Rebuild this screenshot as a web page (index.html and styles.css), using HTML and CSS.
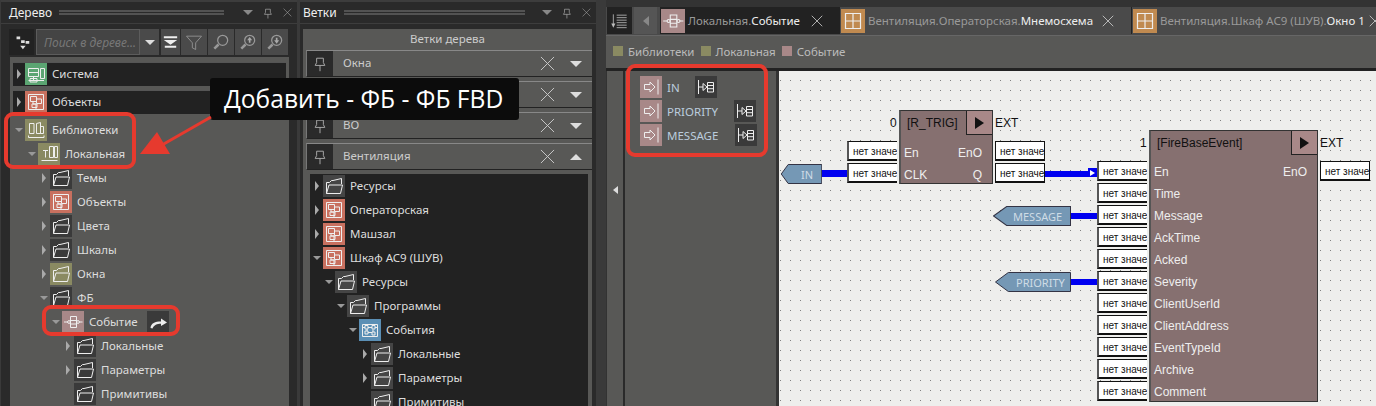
FILE: index.html
```html
<!DOCTYPE html>
<html lang="ru">
<head>
<meta charset="utf-8">
<title>Событие</title>
<link rel="stylesheet" href="styles.css">
</head>
<body>
<svg class="defs" width="0" height="0">
  <symbol id="folder" viewBox="0 0 22 22"><path d="M3.500 18.500V7.500H6.500L8.500 5.500H10L18.500 3.500V9M3.500 18.500L6 10H19.500L17.500 18.500Z" fill="none" stroke="currentColor" stroke-width="1"/></symbol>
  <symbol id="objects" viewBox="0 0 22 22"><path d="M3.500 3.500H18.500V18.500H3.500ZM5.500 5.500H11.500V10.500H5.500ZM11.500 8H16.500V12.500H11.500ZM8 10.500V13H11V18M7 13H12V16.500H7Z" fill="none" stroke="currentColor" stroke-width="1"/></symbol>
  <symbol id="system" viewBox="0 0 22 22"><path d="M3.500 5.500H13.500V13.500H3.500ZM3.500 9.500H13.500M8.500 13.500V17.500M3.500 17.500H19M15.500 5.500H19.500V15.500H15.500ZM5 15.500H12V19H5Z" fill="none" stroke="currentColor" stroke-width="1"/></symbol>
  <symbol id="library" viewBox="0 0 22 22"><path d="M4.500 4.500H9V14.500H4.500ZM11.500 4.500L15.500 3.500V14.500H11.500ZM15.500 7.500H18.500V14.500H15.500ZM3.500 16.500V18.500H19V16.500" fill="none" stroke="currentColor" stroke-width="1"/></symbol>
  <symbol id="local" viewBox="0 0 22 22"><path d="M11.500 3.500H15.500V14.500H11.500ZM16.500 3.500H19.500V14.500H16.500ZM7.500 7V14.500M5 7.500H10M3.500 17.500H19.500" fill="none" stroke="currentColor" stroke-width="1"/></symbol>
  <symbol id="fb" viewBox="0 0 22 22"><path d="M8.500 5.500H14.500V16.500H8.500ZM8.500 9.500H14.500M8.500 13H14.500M2 11H6M17 11H20.500" fill="none" stroke="currentColor" stroke-width="1"/><circle cx="7" cy="11" r="1.400" fill="none" stroke="currentColor"/><circle cx="16" cy="11" r="1.400" fill="none" stroke="currentColor"/></symbol>
  <symbol id="program" viewBox="0 0 22 22"><path d="M3.500 5.500H18.500V17.500H3.500ZM3.500 8.500H18.500M8 8.500V13.500M8 13.500H14M14 10.500V15.500" fill="none" stroke="currentColor" stroke-width="1"/><path d="M6 6.500H9V10H6ZM13 6.500H16V10H13ZM6 12H9V15H6ZM13 13H16V16H13Z" fill="#5b8fb5" stroke="currentColor"/></symbol>
  <symbol id="window" viewBox="0 0 24 24"><path d="M4.500 4.500H19.500V19.500H4.500ZM4.500 12H19.500M12 4.500V19.500" fill="none" stroke="currentColor" stroke-width="1.200"/></symbol>
  <symbol id="pin" viewBox="0 0 26 26"><path d="M9.500 7.500H16.500V12L18 15H8L9.500 12ZM13 15V21" fill="none" stroke="#aaa" stroke-width="1"/></symbol>
  <symbol id="close" viewBox="0 0 16 16"><path d="M1 1L15 15M15 1L1 15" stroke="currentColor" stroke-width="1"/></symbol>
  <symbol id="input" viewBox="0 0 22 22"><path d="M4.500 8.500H10V6L15 11L10 16V13.500H4.500Z M18 3.500V18.500" fill="none" stroke="currentColor" stroke-width="1"/></symbol>
  <symbol id="link" viewBox="0 0 22 22"><path d="M3.500 4V18M3.500 11H8M8 7.500L12 11L8 14.500ZM12.500 6.500H18.500V16H12.500ZM12.500 9.500H18.500M12.500 12.700H18.500" fill="none" stroke="currentColor" stroke-width="1"/></symbol>
  <symbol id="tag-shape" viewBox="0 0 80 20" preserveAspectRatio="none"><polygon points="0.500,10 14,0.500 79.500,0.500 79.500,19.500 14,19.500" fill="#7598b5" stroke="#334" stroke-width="1" vector-effect="non-scaling-stroke"/></symbol>
</svg>

<main class="app">
  <section class="panel tree-panel">
    <header class="panel-head">
      <span class="panel-title">Дерево</span><span class="grip"></span>
      <span class="tri-down small"></span>
      <svg class="head-pin"><use href="#pin"/></svg>
      <svg class="head-close"><use href="#close"/></svg>
    </header>
    <div class="toolbar">
      <button class="tool tool-first"><svg viewBox="0 0 22 22"><path d="M5 5H9V8H5ZM10 9H14V12H10ZM15 10H19V13H15ZM7 8L12 10M12 12V15M9 15H15L12 19Z" fill="#ddd"/></svg></button>
      <div class="search"><span>Поиск в дереве...</span></div>
      <button class="tool tool-drop"><span class="tri-down"></span></button>
      <button class="tool t1"><svg viewBox="0 0 20 20"><path d="M3 4H17V6H3ZM3 8H17L10 13L3 8ZM4 14H16V16H4Z" fill="#eee"/></svg></button>
      <button class="tool t2"><svg viewBox="0 0 24 24"><path d="M3 5H21L14 13V21L10 19V13Z" fill="none" stroke="#999"/></svg></button>
      <button class="tool t2"><svg viewBox="0 0 24 24"><circle cx="14" cy="10" r="6" fill="none" stroke="#999" stroke-width="1.500"/><path d="M9 15L4 20" stroke="#999" stroke-width="3"/></svg></button>
      <button class="tool t2"><svg viewBox="0 0 24 24"><circle cx="14" cy="10" r="6" fill="none" stroke="#999" stroke-width="1.500"/><path d="M9 15L4 20" stroke="#999" stroke-width="3"/><path d="M14 6L11 10H17ZM13 10H15V13H13Z" fill="#aaa"/></svg></button>
      <button class="tool t2"><svg viewBox="0 0 24 24"><circle cx="14" cy="10" r="6" fill="none" stroke="#999" stroke-width="1.500"/><path d="M9 15L4 20" stroke="#999" stroke-width="3"/><path d="M14 14L11 10H17ZM13 7H15V10H13Z" fill="#aaa"/></svg></button>
    </div>
    <div class="tree grey-tree">
      <div class="section first"><i class="arr r"></i><span class="ico green"><svg><use href="#system"/></svg></span><span class="lbl">Система</span></div>
      <div class="section"><i class="arr r"></i><span class="ico red"><svg><use href="#objects"/></svg></span><span class="lbl">Объекты</span></div>
      <div class="rows">
        <div class="row l0"><i class="arr d"></i><span class="ico olive"><svg><use href="#library"/></svg></span><span class="lbl">Библиотеки</span></div>
        <div class="row l1"><i class="arr d"></i><span class="ico olive"><svg><use href="#local"/></svg></span><span class="lbl">Локальная</span></div>
        <div class="row l2"><i class="arr r"></i><span class="ico dark"><svg><use href="#folder"/></svg></span><span class="lbl">Темы</span></div>
        <div class="row l2"><i class="arr r"></i><span class="ico red"><svg><use href="#objects"/></svg></span><span class="lbl">Объекты</span></div>
        <div class="row l2"><i class="arr r"></i><span class="ico dark"><svg><use href="#folder"/></svg></span><span class="lbl">Цвета</span></div>
        <div class="row l2"><i class="arr r"></i><span class="ico dark"><svg><use href="#folder"/></svg></span><span class="lbl">Шкалы</span></div>
        <div class="row l2"><i class="arr r"></i><span class="ico olive"><svg><use href="#folder"/></svg></span><span class="lbl">Окна</span></div>
        <div class="row l2"><i class="arr d"></i><span class="ico dark"><svg><use href="#folder"/></svg></span><span class="lbl">ФБ</span></div>
        <div class="row l3"><i class="arr d"></i><span class="ico rose"><svg><use href="#fb"/></svg></span><span class="lbl name-event">Событие</span>
          <span class="ico dark jump"><svg viewBox="0 0 22 22"><path d="M3.500 17C4 12 8 10.500 14 10.500V7.500L20 11.500L14 15V12.800C10 12.800 7 14 5.500 17.500Z" fill="#eee"/></svg></span></div>
        <div class="row l4"><i class="arr r"></i><span class="ico dark"><svg><use href="#folder"/></svg></span><span class="lbl">Локальные</span></div>
        <div class="row l4"><i class="arr r"></i><span class="ico dark"><svg><use href="#folder"/></svg></span><span class="lbl">Параметры</span></div>
        <div class="row l4"><i class="arr none"></i><span class="ico dark"><svg><use href="#folder"/></svg></span><span class="lbl">Примитивы</span></div>
      </div>
    </div>
  </section>

  <section class="panel branch-panel">
    <header class="panel-head">
      <span class="panel-title">Ветки</span><span class="grip"></span>
      <span class="tri-down small"></span>
      <svg class="head-pin"><use href="#pin"/></svg>
      <svg class="head-close"><use href="#close"/></svg>
    </header>
    <div class="branches">
      <div class="branches-title">Ветки дерева</div>
      <div class="branch"><span class="branch-pin"><svg><use href="#pin"/></svg></span><span class="lbl branch-name">Окна</span><svg class="branch-x"><use href="#close"/></svg><span class="tri-down big"></span></div>
      <div class="branch"><span class="branch-pin"><svg><use href="#pin"/></svg></span><span class="lbl branch-name">ТГА</span><svg class="branch-x"><use href="#close"/></svg><span class="tri-down big"></span></div>
      <div class="branch"><span class="branch-pin"><svg><use href="#pin"/></svg></span><span class="lbl branch-name">ВО</span><svg class="branch-x"><use href="#close"/></svg><span class="tri-down big"></span></div>
      <div class="branch"><span class="branch-pin"><svg><use href="#pin"/></svg></span><span class="lbl branch-name">Вентиляция</span><svg class="branch-x"><use href="#close"/></svg><span class="tri-up big"></span></div>
      <div class="tree dark-tree">
        <div class="row l0"><i class="arr r"></i><span class="ico grey"><svg><use href="#folder"/></svg></span><span class="lbl">Ресурсы</span></div>
        <div class="row l0"><i class="arr r"></i><span class="ico red"><svg><use href="#objects"/></svg></span><span class="lbl">Операторская</span></div>
        <div class="row l0"><i class="arr r"></i><span class="ico red"><svg><use href="#objects"/></svg></span><span class="lbl">Машзал</span></div>
        <div class="row l0"><i class="arr d"></i><span class="ico red"><svg><use href="#objects"/></svg></span><span class="lbl">Шкаф АС9 (ШУВ)</span></div>
        <div class="row l1"><i class="arr d"></i><span class="ico grey"><svg><use href="#folder"/></svg></span><span class="lbl">Ресурсы</span></div>
        <div class="row l2"><i class="arr d"></i><span class="ico grey"><svg><use href="#folder"/></svg></span><span class="lbl">Программы</span></div>
        <div class="row l3"><i class="arr d"></i><span class="ico blue"><svg><use href="#program"/></svg></span><span class="lbl">События</span></div>
        <div class="row l4"><i class="arr r"></i><span class="ico grey"><svg><use href="#folder"/></svg></span><span class="lbl">Локальные</span></div>
        <div class="row l4"><i class="arr r"></i><span class="ico grey"><svg><use href="#folder"/></svg></span><span class="lbl">Параметры</span></div>
        <div class="row l4"><i class="arr none"></i><span class="ico grey"><svg><use href="#folder"/></svg></span><span class="lbl">Примитивы</span></div>
      </div>
    </div>
  </section>

  <section class="editor">
    <nav class="tabs">
      <button class="tab-btn list"><svg viewBox="0 0 24 24"><path d="M8 5H20M8 8H20M8 11H20M8 14H20M8 17H20M8 20H20M4 4V17" stroke="#bbb" fill="none"/><path d="M1.500 15H6.500L4 20Z" fill="#bbb"/></svg></button>
      <button class="tab-btn back"><span class="tri-left"></span></button>
      <div class="tab active"><span class="tab-ico rose"><svg><use href="#fb"/></svg></span><span class="tab-text"><span class="muted">Локальная.</span>Событие</span><svg class="tab-x"><use href="#close"/></svg></div>
      <div class="tab t-vent"><span class="tab-ico orange"><svg><use href="#window"/></svg></span><span class="tab-text"><span class="muted">Вентиляция.Операторская.</span>Мнемосхема</span><svg class="tab-x"><use href="#close"/></svg></div>
      <div class="tab t-last"><span class="tab-ico orange"><svg><use href="#window"/></svg></span><span class="tab-text"><span class="muted">Вентиляция.Шкаф АС9 (ШУВ).</span>Окно 1</span><svg class="tab-x"><use href="#close"/></svg></div>
    </nav>
    <div class="crumbs">
      <span class="sq olive-sq"></span><span class="crumb">Библиотеки</span>
      <span class="sq olive-sq"></span><span class="crumb">Локальная</span>
      <span class="sq rose-sq"></span><span class="crumb">Событие</span>
    </div>
    <div class="work">
      <div class="strip"><span class="tri-left white"></span></div>
      <aside class="fn-vars">
        <div class="var"><span class="ico rose"><svg><use href="#input"/></svg></span><span class="var-name w-in">IN</span><span class="ico dark"><svg><use href="#link"/></svg></span></div>
        <div class="var"><span class="ico rose"><svg><use href="#input"/></svg></span><span class="var-name w-pr">PRIORITY</span><span class="ico dark"><svg><use href="#link"/></svg></span></div>
        <div class="var"><span class="ico rose"><svg><use href="#input"/></svg></span><span class="var-name w-ms">MESSAGE</span><span class="ico dark"><svg><use href="#link"/></svg></span></div>
      </aside>
      <div class="canvas">
        <div class="wire w1"></div>
        <div class="wire w2"></div>
        <div class="wire w3"></div>
        <div class="wire w4"></div>
        <span class="wire-tip"><i></i></span>
        <div class="tag tag-in"><svg><use href="#tag-shape"/></svg><span>IN</span></div>
        <div class="tag tag-msg"><svg><use href="#tag-shape"/></svg><span>MESSAGE</span></div>
        <div class="tag tag-pri"><svg><use href="#tag-shape"/></svg><span>PRIORITY</span></div>

        <div class="fb fb-trig">
          <div class="pins in">
            <span class="pin-box">нет значения</span>
            <span class="pin-box">нет значения</span>
          </div>
          <div class="fb-body">
            <span class="fb-num">0</span>
            <div class="fb-head"><span class="fb-title">[R_TRIG]</span><span class="fb-run"><i></i></span></div>
            <span class="fb-ext">EXT</span>
            <div class="fb-row"><span>En</span><span>EnO</span></div>
            <div class="fb-row"><span>CLK</span><span>Q</span></div>
          </div>
          <div class="pins out">
            <span class="pin-box">нет значения</span>
            <span class="pin-box">нет значения</span>
          </div>
        </div>

        <div class="fb fb-event">
          <div class="pins in">
            <span class="pin-box">нет значения</span><span class="pin-box">нет значения</span><span class="pin-box">нет значения</span><span class="pin-box">нет значения</span><span class="pin-box">нет значения</span><span class="pin-box">нет значения</span><span class="pin-box">нет значения</span><span class="pin-box">нет значения</span><span class="pin-box">нет значения</span><span class="pin-box">нет значения</span><span class="pin-box">нет значения</span>
          </div>
          <div class="fb-body">
            <span class="fb-num">1</span>
            <div class="fb-head"><span class="fb-title">[FireBaseEvent]</span><span class="fb-run"><i></i></span></div>
            <span class="fb-ext">EXT</span>
            <div class="fb-row"><span>En</span><span>EnO</span></div>
            <div class="fb-row"><span>Time</span></div>
            <div class="fb-row"><span>Message</span></div>
            <div class="fb-row"><span>AckTime</span></div>
            <div class="fb-row"><span>Acked</span></div>
            <div class="fb-row"><span>Severity</span></div>
            <div class="fb-row"><span>ClientUserId</span></div>
            <div class="fb-row"><span>ClientAddress</span></div>
            <div class="fb-row"><span>EventTypeId</span></div>
            <div class="fb-row"><span>Archive</span></div>
            <div class="fb-row"><span>Comment</span></div>
          </div>
          <div class="pins out">
            <span class="pin-box">нет значения</span>
          </div>
        </div>
      </div>
    </div>
  </section>
</main>

<div class="note">Добавить - ФБ - ФБ FBD</div>
<div class="mark m-lib"></div>
<div class="mark m-event"></div>
<div class="mark m-vars"></div>
<svg class="arrow" width="80" height="45" viewBox="0 0 80 45"><path d="M71 2L22 30" stroke="#e63a2e" stroke-width="3"/><path d="M0 39L17 17L30 39Z" fill="#e63a2e"/></svg>
</body>
</html>
```
FILE: styles.css
```css
* { box-sizing: border-box; }
html, body { margin: 0; height: 406px; overflow: hidden; }
body { background: #333; font: 11.5px "Noto Sans", "Open Sans", sans-serif; color: #ddd; position: relative; }
.defs { position: absolute; }
.app { display: flex; height: 406px; background: #3a3a3a; }
button { border: 0; padding: 0; margin: 0; display: flex; align-items: center; justify-content: center; }
.lbl { padding-bottom: 2px; }

.panel { background: #2a2a2a; display: flex; flex-direction: column; height: 406px; overflow: hidden; }
.tree-panel { width: 297px; margin-right: 3px; padding: 0 8px 0 3px; border-left: 1px solid #3a3a3a; }
.branch-panel { width: 296px; margin-right: 10px; padding: 0 4px 0 3px; }
.panel-head { height: 24px; display: flex; align-items: center; border-bottom: 1px solid #3d3d3d; margin: 0 -8px 0 -3px; padding: 0 5px 0 8px; border-top: 2px solid #3d3d3d; flex: none; color: #eee; }
.branch-panel .panel-head { margin: 0 -4px 0 -3px; padding-left: 3px; }
.panel-title { font-size: 12px; width: 50px; }
.branch-panel .panel-title { width: 41px; }
.grip { width: 167px; height: 6px; background-image: radial-gradient(circle at 1px 1px, #555 .7px, transparent .9px); background-size: 2px 3px; margin-right: 19px; }
.branch-panel .grip { width: 184px; margin-right: 17px; }
.head-pin { width: 18px; height: 18px; margin-left: 6px; }
.head-close { width: 9px; height: 9px; margin-left: 6px; color: #aaa; stroke-width: 2; }

.tri-down { display: inline-block; width: 0; height: 0; border: 5px solid transparent; border-top: 5px solid #ddd; border-bottom: 0; }
.tri-down.small { border-top-color: #888; }
.tri-down.big { border-width: 6px 6px 0; border-top-color: #ddd; }
.tri-up.big { display: inline-block; width: 0; height: 0; border: solid transparent; border-width: 0 6px 6px; border-bottom-color: #ddd; }
.tri-left { display: inline-block; width: 0; height: 0; border: solid transparent; border-width: 5px 6px 5px 0; border-right-color: #888; }
.tri-left.white { border-width: 4px 5px 4px 0; border-right-color: #ddd; }

.toolbar { display: flex; height: 26px; margin: 5px 0 2px 5px; flex: none; }
.tool { background: #4a4a4a; height: 26px; flex: none; }
.tool svg { width: 20px; height: 20px; }
.tool-first { width: 25px; background: #222; margin-right: 2px; }
.search { width: 105px; background: #444; border: 1px solid #5c5c5c; display: flex; align-items: center; padding-left: 7px; font-style: italic; color: #777; font-size: 12px; white-space: nowrap; overflow: hidden; }
.tool-drop { width: 19px; background: #4a4a4a; margin-right: 2px; }
.t1 { width: 19px; margin-right: 1px; }
.t2 { width: 26px; margin-right: 1px; }

.tree { flex: 1; }
.grey-tree { background: #585856; margin-left: 6px; padding: 5px 0 0; }
.section { margin: 0 3px 4px; height: 24px; background: #222; box-shadow: inset 0 1px 0 #555; display: flex; align-items: center; color: #ddd; padding-left: 2px; }
.section .ico { margin-right: 5px; }
.row { height: 24px; display: flex; align-items: center; color: #ddd; }
.grey-tree .l0 { padding-left: 5px; }
.grey-tree .l1 { padding-left: 18px; }
.grey-tree .l2 { padding-left: 30px; }
.grey-tree .l3 { padding-left: 42px; }
.grey-tree .l4 { padding-left: 54px; }
.dark-tree .l0 { padding-left: 3px; }
.dark-tree .l1 { padding-left: 15px; }
.dark-tree .l2 { padding-left: 27px; }
.dark-tree .l3 { padding-left: 39px; }
.dark-tree .l4 { padding-left: 51px; }
.arr { width: 10px; height: 10px; flex: none; position: relative; display: block; }
.arr.r::before { content: ""; position: absolute; left: 2px; top: 0; border: solid transparent; border-width: 5px 0 5px 4px; border-left-color: #aaa; }
.arr.d::before { content: ""; position: absolute; left: 0; top: 3px; border: solid transparent; border-width: 4px 4px 0; border-top-color: #999; }
.ico { width: 22px; height: 22px; flex: none; margin-right: 5px; display: block; color: #eee; }
.ico svg { width: 22px; height: 22px; display: block; }
.green { background: #5ba572; }
.red { background: #c8705f; }
.olive { background: #8a8a62; }
.rose { background: #a88888; }
.dark { background: #3a3a3a; }
.grey { background: #454545; }
.blue { background: #5b8fb5; }
.orange { background: #c08a50; }
.name-event { width: 48px; }
.jump { margin-left: 10px; margin-right: 0; }

.branches { background: #585856; flex: 1; padding: 0 3px; margin: 5px 0 0; }
.branches-title { height: 21px; text-align: center; line-height: 19px; color: #ccc; }
.branch { height: 27px; margin-bottom: 4px; display: flex; align-items: center; background: #585856; border-top: 1px solid #888; border-bottom: 1px solid #222; border-left: 1px solid #777; color: #ccc; margin-right: -3px; }
.branch-pin { width: 26px; height: 25px; background: #2a2a2a; display: block; flex: none; }
.branch-pin svg { width: 26px; height: 25px; display: block; }
.branch-name { width: 207px; padding-left: 10px; flex: none; }
.branch-x { width: 15px; height: 15px; color: #ccc; flex: none; margin-right: 15px; }
.dark-tree { background: #222; margin: 3px 1px 0 4px; height: 233px; overflow: hidden; }

.editor { width: 770px; display: flex; flex-direction: column; height: 406px; padding-top: 7px; background: #333; overflow: hidden; flex: none; }
.tabs { display: flex; height: 28px; background: #4a4a4a; flex: none; padding-left: 1px; }
.tab-btn { height: 27px; width: 25px; background: #222; margin-right: 2px; flex: none; }
.tab-btn svg { width: 20px; height: 20px; }
.tab-btn.back { width: 23px; background: #555; margin-right: 3px; }
.tab { height: 27px; display: flex; align-items: center; background: #4a4a4a; border-right: 1px solid #222; flex: none; color: #eee; white-space: nowrap; padding-left: 1px; }
.tab.active { background: #222; width: 180px; }
.t-vent { width: 292px; }
.t-last { width: 244px; border: 0; }
.tab-ico { width: 24px; height: 24px; flex: none; margin-right: 3px; display: block; color: #eee; }
.tab-ico svg { width: 24px; height: 24px; display: block; }
.tab-text { width: 123px; flex: none; }
.t-vent .tab-text { width: 234px; }
.t-last .tab-text { width: 209px; }
.muted { color: #999; }
.tab-x { width: 12px; height: 12px; color: #ddd; flex: none; }
.crumbs { height: 33px; background: #585856; display: flex; align-items: center; padding: 0 0 2px 7px; border-top: 1px solid #666; flex: none; color: #bbb; }
.sq { width: 10px; height: 10px; margin-right: 5px; flex: none; }
.olive-sq { background: #8a8a62; }
.rose-sq { background: #a88888; }
.crumb { margin-right: 6px; }
.work { flex: 1; display: flex; border-top: 3px solid #222; position: relative; min-height: 0; }
.strip { width: 18px; background: #585856; border-right: 2px solid #2a2a2a; display: flex; align-items: center; justify-content: center; margin-left: 1px; flex: none; padding-bottom: 98px; }
.fn-vars { width: 152px; background: #585856; padding-top: 4px; flex: none; border-right: 1px solid #333; }
.var { height: 24px; display: flex; align-items: center; padding-left: 15px; color: #bcd; }
.var-name { flex: none; }
.w-in { width: 28px; }
.w-pr { width: 67px; }
.w-ms { width: 68px; }
.var .ico { color: #eee; }
.canvas { flex: 1; position: relative; margin-left: 2px; background-color: #eeeeec; background-image: radial-gradient(circle at 1.5px 1.5px, #808080 .7px, transparent 1px); background-size: 10px 10px; background-position: 0 8px; font-family: "Liberation Sans", Arial, sans-serif; overflow: hidden; }

.wire { position: absolute; background: #0000f0; }
.w1 { left: 42px; top: 99px; width: 26px; height: 7px; }
.w2 { left: 266px; top: 100px; width: 52px; height: 6px; }
.w3 { left: 291px; top: 142px; width: 27px; height: 6px; }
.w4 { left: 291px; top: 208px; width: 27px; height: 6px; }
.wire-tip { position: absolute; left: 309px; top: 97px; width: 9px; height: 9px; background: #0000f0; display: block; }
.wire-tip i { display: block; width: 0; height: 0; margin: 2px 0 0 2px; border: solid transparent; border-width: 3px 0 3px 5px; border-left-color: #fff; }
.tag { position: absolute; height: 20px; color: #cfdce6; display: flex; align-items: center; font: 11px "Noto Sans", sans-serif; }
.tag svg { position: absolute; left: 0; top: 0; width: 100%; height: 100%; }
.tag span { position: relative; }
.tag-in { left: 2px; top: 93px; width: 41px; padding-left: 20px; }
.tag-msg { left: 214px; top: 135px; width: 78px; padding-left: 20px; }
.tag-pri { left: 216px; top: 201px; width: 76px; padding-left: 21px; }

.fb { position: absolute; display: flex; }
.fb-trig { left: 68px; top: 39px; }
.fb-event { left: 318px; top: 59px; }
.pins { display: flex; flex-direction: column; gap: 2px; width: 50px; padding-top: 31px; }
.pins.out { width: 52px; margin-left: 2px; }
.pin-box { height: 20px; width: 50px; background: #fff; border: 1px solid #111; border-left: 2px solid #555; border-bottom-width: 2px; color: #111; font: 10px/19px "Liberation Sans", sans-serif; white-space: nowrap; overflow: hidden; padding-left: 4px; }
.pins.in .pin-box { border-right: 0; }
.pins.out .pin-box { border-left: 1px solid #111; }
.fb-body { position: relative; background: #867070; border: 1px solid #333; border-left: 2px solid #555; margin-left: 2px; }
.fb-trig .fb-body { width: 94px; height: 74px; }
.fb-event .fb-body { width: 169px; height: 272px; }
.fb-head { height: 30px; display: flex; justify-content: space-between; color: #111; }
.fb-trig .fb-head { height: 31px; }
.fb-title { padding: 5px 0 0 6px; font-size: 12px; }
.fb-run { width: 26px; height: 24px; background: #a88888; border-left: 1px solid #222; border-bottom: 1px solid #222; display: flex; align-items: center; justify-content: center; }
.fb-run i { display: block; width: 0; height: 0; border: solid transparent; border-width: 6px 0 6px 9px; border-left-color: #111; }
.fb-num { position: absolute; left: -11px; top: 5px; color: #111; font-size: 12px; }
.fb-ext { position: absolute; left: 100%; margin-left: 3px; top: 5px; color: #111; font-size: 12px; }
.fb-row { height: 22px; display: flex; align-items: center; justify-content: space-between; padding: 0 10px 0 3px; color: #eee; font-size: 12px; }

.note { position: absolute; left: 210px; top: 78px; width: 309px; height: 42px; background: #0c0c0c; border-radius: 3px; color: #fff; font: 24.6px/42px "Open Sans", sans-serif; padding-left: 14px; white-space: nowrap; }
.mark { position: absolute; border: 4px solid #e63a2e; border-radius: 9px; }
.m-lib { left: 4px; top: 112px; width: 132px; height: 57px; }
.m-event { left: 42px; top: 305px; width: 138px; height: 31px; }
.m-vars { left: 626px; top: 64px; width: 142px; height: 93px; }
.arrow { position: absolute; left: 140px; top: 115px; }
```
